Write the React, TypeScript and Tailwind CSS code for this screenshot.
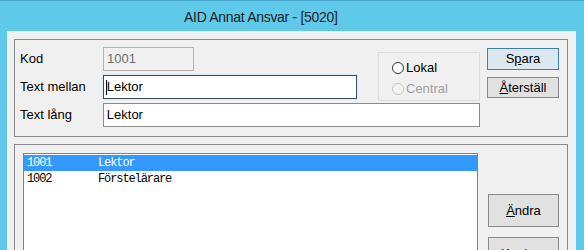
import React from 'react';

const sans = { fontFamily: '"Liberation Sans", Arial, sans-serif' };

function WinButton({ children, isDefault = false, className = '' }: { children: React.ReactNode; isDefault?: boolean; className?: string }) {
  return (
    <div
      className={`flex items-center justify-center text-[13px] text-black border ${
        isDefault ? 'border-[#3c7fb1] bg-[#dde7f0]' : 'border-[#8a8a8a] bg-[#e1e1e1]'
      } ${className}`}
    >
      {children}
    </div>
  );
}

function Radio({ label, disabled = false }: { label: string; disabled?: boolean }) {
  return (
    <div className="flex items-center h-[21px]">
      <div
        className={`w-[12px] h-[12px] rounded-full border ${
          disabled ? 'border-[#c4c4c4] bg-[#f4f4f4]' : 'border-[#333333] bg-white'
        }`}
      />
      <span className={`ml-[2px] text-[13px] ${disabled ? 'text-[#a0a0a0]' : 'text-black'}`}>{label}</span>
    </div>
  );
}

const rows = [
  { kod: '1001', text: 'Lektor' },
  { kod: '1002', text: 'Förstelärare' },
];

export default function App() {
  return (
    <div className="w-[584px] h-[250px] overflow-hidden bg-[#5fc9e9] border-t border-[#4aa8cc] flex flex-col" style={sans}>
      {/* title bar */}
      <div className="h-[30px] flex-none flex items-center pl-[184px] pt-[2px]">
        <span className="text-[14px] tracking-[-0.3px] text-[#1e1e1e]">AID Annat Ansvar - [5020]</span>
      </div>

      {/* client area */}
      <div className="flex-1 ml-[7px] mr-[8px] bg-[#f0f0f0] pl-[7px] pr-[8px] pt-[8px] overflow-hidden">
        {/* upper group */}
        <div className="h-[98px] border border-[#8a8a8a] flex pl-[5px] pt-[7px]">
          <div className="w-[460px] flex-none flex flex-col">
            <div className="flex">
              <div className="flex flex-col gap-[4px] w-[337px] flex-none">
                <div className="flex items-center h-[24px]">
                  <span className="w-[83px] text-[13px] text-black">Kod</span>
                  <div className="w-[91px] h-[24px] border border-[#b4b4b4] bg-[#f0f0f0] flex items-center pl-[3px] text-[13px] text-[#6d6d6d]">
                    1001
                  </div>
                </div>
                <div className="flex items-center h-[24px]">
                  <span className="w-[83px] text-[13px] text-black">Text mellan</span>
                  <div className="w-[255px] h-[24px] border border-[#3a4f60] shadow-[0_0_0_1px_#d9e9f7] bg-white flex items-center pl-[2px] text-[13px] text-black">
                    <span className="w-px h-[15px] bg-black" />
                    <span>Lektor</span>
                  </div>
                </div>
              </div>
              <div className="ml-[21px] mt-[5px] w-[103px] h-[49px] border border-[#dcdcdc] flex flex-col pl-[13px] pt-[4px]">
                <Radio label="Lokal" />
                <Radio label="Central" disabled />
              </div>
            </div>
            <div className="flex items-center h-[24px] mt-[2px]">
              <span className="w-[83px] text-[13px] text-black">Text lång</span>
              <div className="w-[378px] h-[24px] border border-[#8c8c8c] bg-white flex items-center pl-[3px] text-[13px] text-black">
                Lektor
              </div>
            </div>
          </div>
          <div className="ml-[7px] mt-[1px] flex flex-col gap-[7px]">
            <WinButton isDefault className="w-[72px] h-[22px]">
              <span>
                S<span className="underline underline-offset-[1px]">p</span>ara
              </span>
            </WinButton>
            <WinButton className="w-[72px] h-[21px]">
              <span>
                <span className="underline underline-offset-[1px]">Å</span>terställ
              </span>
            </WinButton>
          </div>
        </div>

        {/* lower group */}
        <div className="mt-[7px] h-[200px] border border-[#8a8a8a] flex pl-[8px] pt-[8px]">
          <div
            className="w-[455px] h-[180px] flex-none border border-[#828282] bg-white pt-[1px] text-[12px] tracking-[-1.1px]"
            style={{ fontFamily: '"Liberation Mono", "Courier New", monospace' }}
          >
            {rows.map((r, i) => (
              <div key={r.kod} className={`flex items-center h-[16px] pl-[3px] ${i === 0 ? 'bg-[#3399ff] text-white' : 'text-black'}`}>
                <span className="w-[71px]">{r.kod}</span>
                <span>{r.text}</span>
              </div>
            ))}
          </div>
          <div className="ml-[10px] mt-[41px] flex flex-col gap-[10px]">
            <WinButton className="w-[71px] h-[33px]">
              <span>
                <span className="underline underline-offset-[1px]">Ä</span>ndra
              </span>
            </WinButton>
            <WinButton className="w-[71px] h-[33px]">
              <span>
                <span className="underline underline-offset-[1px]">K</span>opiera
              </span>
            </WinButton>
          </div>
        </div>
      </div>
    </div>
  );
}
